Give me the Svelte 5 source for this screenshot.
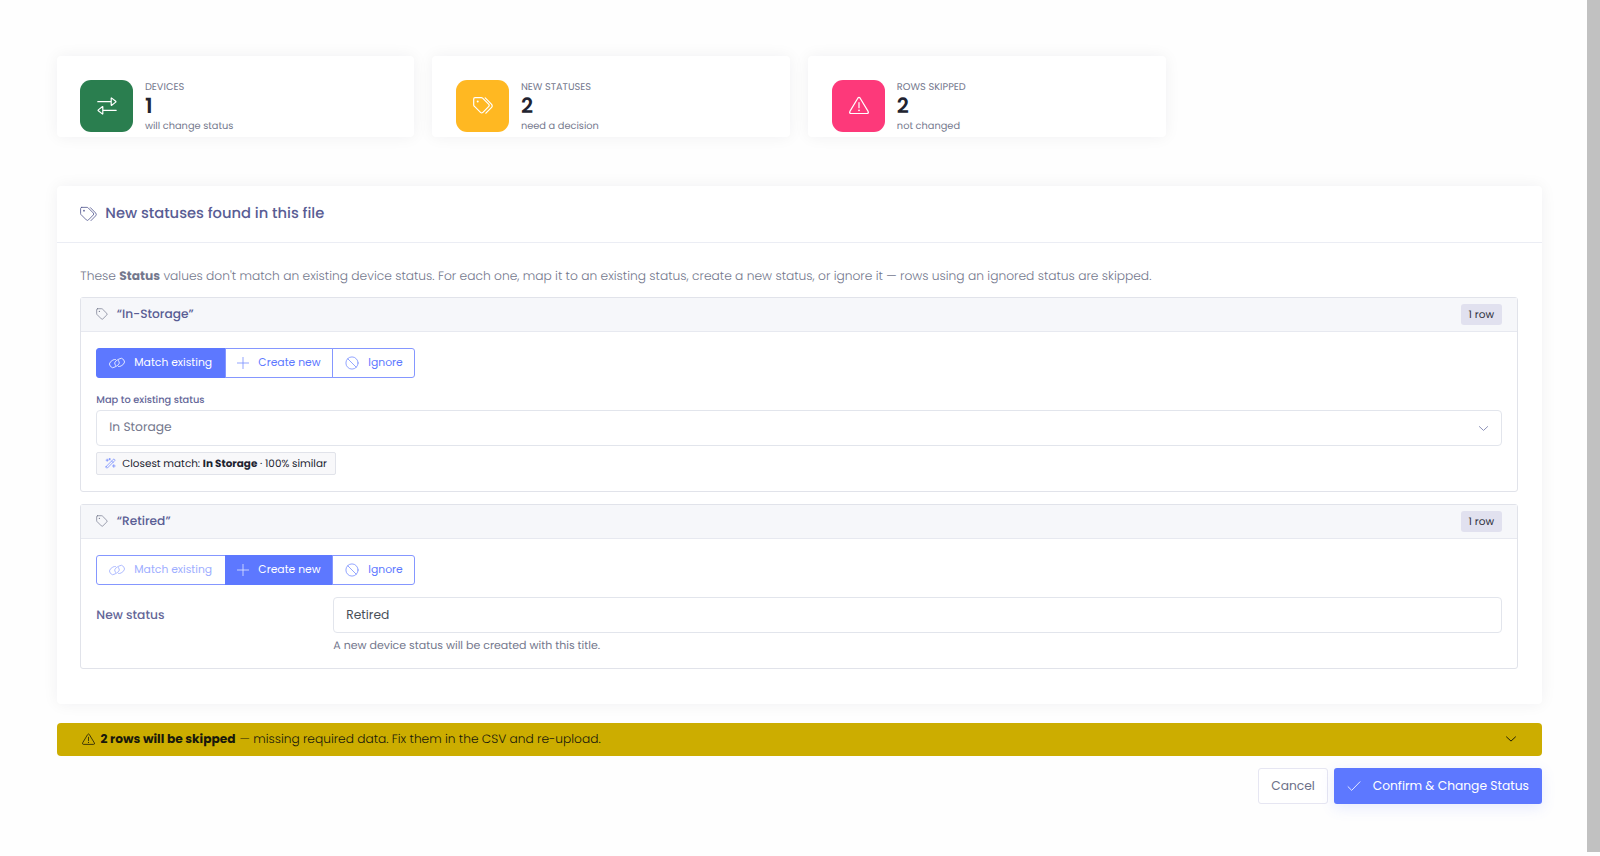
<script>
  const stats = [
    { label: "DEVICES", value: 1, note: "will change status", icon: "swap", tone: "green" },
    { label: "NEW STATUSES", value: 2, note: "need a decision", icon: "tags", tone: "amber" },
    { label: "ROWS SKIPPED", value: 2, note: "not changed", icon: "warning", tone: "pink" },
  ];

  const actions = [
    { id: "match", label: "Match existing", icon: "link" },
    { id: "create", label: "Create new", icon: "plus" },
    { id: "ignore", label: "Ignore", icon: "ban" },
  ];

  let statuses = $state([
    { name: "In-Storage", rows: 1, action: "match", match: "In Storage", similar: 100 },
    { name: "Retired", rows: 1, action: "create", match: null, title: "Retired" },
  ]);
</script>

{#snippet icon(name, size)}
  <svg class="icon" width={size} height={size} viewBox="0 0 20 20">
    {#if name === "swap"}
      <path d="M.8 5.7h13.4M14.2 2.3v6.8q0 .6.5.2l4-3.2q.5-.4 0-.8l-4-3.2q-.5-.4-.5.2zM19.2 14.3H5.8M5.8 10.9v6.8q0 .6-.5.2l-4-3.2q-.5-.4 0-.8l4-3.2q.5-.4.5.2z" />
    {:else if name === "tags"}
      <path d="M2 1.6h6.2q.8 0 1.4.6l6 6q1.2 1.2 0 2.4l-5.7 5.8q-1.2 1.2-2.4 0l-6-6Q.7 9.8.7 9V3q0-1.4 1.3-1.4zM12.2 1.9l6.2 6.3q1.6 1.7 0 3.4l-5.5 5.6" />
      <circle class="dot" cx="4.7" cy="5.5" r="1" />
    {:else if name === "tag"}
      <path d="M2.6 1.2h6.8q.8 0 1.4.6l7.3 7.3q1.2 1.2 0 2.4l-6.7 6.7q-1.2 1.2-2.4 0l-7.3-7.3q-.6-.6-.6-1.4V2.7q0-1.5 1.5-1.5z" />
      <circle class="dot" cx="5.6" cy="5.7" r="1" />
    {:else if name === "warning"}
      <path d="M8.8 2.2q1.2-1.7 2.4 0l7.9 13.2q.9 1.9-1.2 2.1H2.1Q0 17.3.9 15.4zM10 6.5v5.2" />
      <circle class="dot" cx="10" cy="14.3" r=".9" />
    {:else if name === "link"}
      <g transform="rotate(14 10 10)">
        <path d="M8.7 13.4a4.1 4.1 0 0 1-.4-5.9l2.9-2.9a4.3 4.3 0 0 1 6.9 5.1l-2.2 2.6q-1.4 1.4-3 1.5" />
        <path d="M11.3 6.6a4.1 4.1 0 0 1 .4 5.9l-2.9 2.9a4.3 4.3 0 0 1-6.9-5.1l2.2-2.6q1.4-1.4 3-1.5" />
      </g>
    {:else if name === "plus"}
      <path d="M10 2v16M2 10h16" />
    {:else if name === "ban"}
      <circle cx="10" cy="10" r="8.7" />
      <path d="M3.9 3.9l12.2 12.2" />
    {:else if name === "wand"}
      <path d="M1.9 15.7L15.3 2.2q.8-.8 1.6 0l.9.9q.8.8 0 1.6L4.4 18.2q-.8.8-1.6 0l-.9-.9q-.8-.8 0-1.6zM12 5.5l2.6 2.6M4 2v4M2 4h4M8.5.8v2.5M7.3 2h2.5M16 12v5M13.5 14.5h5" />
    {:else if name === "check"}
      <path d="M1.5 11l5.2 5.2L18.5 4" />
    {:else if name === "down"}
      <path d="M2.5 6.5l7.5 7 7.5-7" />
    {/if}
  </svg>
{/snippet}

<div class="page">
  <main>
    <section class="stats">
      {#each stats as stat}
        <div class="stat">
          <div class="stat-icon {stat.tone}">{@render icon(stat.icon, 20)}</div>
          <div class="stat-text">
            <span class="stat-label">{stat.label}</span>
            <strong>{stat.value}</strong>
            <span class="stat-note">{stat.note}</span>
          </div>
        </div>
      {/each}
    </section>

    <section class="card">
      <header class="card-header">
        {@render icon("tags", 17)}
        <h2>New statuses found in this file</h2>
      </header>
      <div class="card-body">
        <p class="intro">
          These <b>Status</b> values don't match an existing device status. For each one, map it to an existing status, create a new status, or ignore it — rows using an ignored status are skipped.
        </p>

        {#each statuses as status}
          <div class="status">
            <div class="status-header">
              {@render icon("tag", 12)}
              <h3>“{status.name}”</h3>
              <span class="badge">{status.rows} row</span>
            </div>
            <div class="status-body">
              <div class="btn-group">
                {#each actions as action}
                  <button
                    class="{action.id} {status.action === action.id ? 'active' : ''}"
                    disabled={action.id === "match" && !status.match}
                    onclick={() => (status.action = action.id)}
                  >
                    {@render icon(action.icon, action.id === "match" ? 16 : 14)}
                    <span>{action.label}</span>
                  </button>
                {/each}
              </div>

              {#if status.action === "match"}
                <div class="map-label">Map to existing status</div>
                <div class="select">
                  <span>{status.match}</span>
                  {@render icon("down", 11)}
                </div>
                <div class="closest">
                  {@render icon("wand", 11)}
                  <span>Closest match: <b>{status.match}</b> · {status.similar}% similar</span>
                </div>
              {:else if status.action === "create"}
                <div class="new-status">
                  <label for="new-status">New status</label>
                  <div class="field">
                    <input id="new-status" type="text" bind:value={status.title} />
                    <small>A new device status will be created with this title.</small>
                  </div>
                </div>
              {/if}
            </div>
          </div>
        {/each}
      </div>
    </section>

    <div class="alert">
      {@render icon("warning", 13)}
      <b>2 rows will be skipped</b>
      <span>— missing required data. Fix them in the CSV and re-upload.</span>
      {@render icon("down", 12)}
    </div>

    <div class="footer">
      <button class="cancel">Cancel</button>
      <button class="confirm">
        {@render icon("check", 14)}
        <span>Confirm &amp; Change Status</span>
      </button>
    </div>
  </main>
  <div class="scrollbar"></div>
</div>

<style>
  :global(body) {
    margin: 0;
    background: #fefefe;
    overflow: hidden;
  }

  .page {
    display: flex;
    height: 856px;
    font-family: Poppins, Inter, sans-serif;
    font-size: 13px;
    color: #74788d;
    text-rendering: geometricPrecision;
  }

  .page * {
    box-sizing: border-box;
  }

  main {
    flex: 1;
    padding: 56px 45.4px 0 56.5px;
  }

  .scrollbar {
    width: 13px;
    height: 852px;
    background: #c1c1c1;
  }

  .icon {
    flex: none;
    fill: none;
    stroke: currentColor;
    stroke-width: 1.2;
    stroke-linecap: round;
    stroke-linejoin: round;
  }

  .icon .dot {
    fill: currentColor;
    stroke: none;
  }

  button {
    font-family: inherit;
  }

  h2,
  h3,
  p {
    margin: 0;
  }

  .stats {
    display: flex;
    gap: 18.4px;
  }

  .stat {
    display: flex;
    width: 357.6px;
    height: 81px;
    padding: 23.8px;
    border-radius: 4px;
    background: #fff;
    box-shadow: 0 0 16px rgba(40, 40, 50, 0.06);
  }

  .stat-icon {
    display: flex;
    align-items: center;
    justify-content: center;
    flex: none;
    width: 52.6px;
    height: 52.6px;
    margin-right: 12px;
    border-radius: 11px;
    color: #fff;
  }

  .green {
    background: #2a7e4f;
  }

  .amber {
    background: #ffb822;
  }

  .pink {
    background: #fd397a;
  }

  .stat-text {
    display: flex;
    flex-direction: column;
    white-space: nowrap;
  }

  .stat-label {
    font-size: 9.8px;
    line-height: 16.4px;
  }

  .stat-text strong {
    font-size: 21px;
    font-weight: 600;
    line-height: 22px;
    color: #212330;
  }

  .stat-note {
    font-size: 9.8px;
    line-height: 17px;
  }

  .card {
    height: 517.6px;
    margin-top: 49.4px;
    border-radius: 4px;
    background: #fff;
    box-shadow: 0 0 16px rgba(40, 40, 50, 0.06);
  }

  .card-header {
    display: flex;
    align-items: center;
    height: 56.6px;
    padding: 0 23.8px;
    border-bottom: 1px solid #ebedf4;
    color: #595d94;
  }

  .card-header .icon {
    stroke-width: 1;
  }

  h2 {
    margin-left: 8px;
    padding-top: 1px;
    font-size: 14.7px;
    font-weight: 500;
  }

  .card-body {
    padding: 22px 23.8px 0;
  }

  .intro {
    height: 32px;
    padding-top: 1px;
    font-size: 12.24px;
    font-weight: 300;
    line-height: 22px;
    white-space: nowrap;
  }

  .intro b {
    font-weight: 700;
  }

  .status {
    margin-bottom: 12px;
    border: 1px solid #e1e3ea;
    border-radius: 3px;
  }

  .status-header {
    display: flex;
    align-items: center;
    height: 34px;
    padding: 0 15px;
    border-bottom: 1px solid #e7e9f0;
    background: #f6f7fa;
  }

  h3 {
    margin-left: 8.5px;
    padding-top: 1.5px;
    font-size: 12.2px;
    font-weight: 500;
    color: #595d94;
  }

  .badge {
    width: 41px;
    height: 20.5px;
    margin-left: auto;
    border-radius: 3px;
    background: #e1e1ef;
    font-size: 10.5px;
    line-height: 21.5px;
    text-align: center;
    color: #30323e;
  }

  .status-body {
    padding: 15.6px 15px 16.4px;
  }

  .btn-group {
    display: flex;
  }

  .btn-group button {
    display: flex;
    align-items: center;
    height: 30px;
    padding: 0 0 0 12px;
    border: 1px solid #8597ff;
    background: #fff;
    font-size: 10.8px;
    white-space: nowrap;
    color: #5d78ff;
  }

  .btn-group span {
    padding-top: 1px;
  }

  .btn-group .icon {
    stroke-width: 1.1;
    opacity: 0.85;
  }

  .btn-group .match {
    width: 130px;
    border-radius: 3px 0 0 3px;
  }

  .btn-group .match span {
    margin-left: 9px;
  }

  .btn-group .create {
    width: 108px;
    margin-left: -1px;
    padding-left: 10px;
  }

  .btn-group .create span {
    margin-left: 8px;
  }

  .btn-group .ignore {
    width: 83px;
    margin-left: -1px;
    border-radius: 0 3px 3px 0;
  }

  .btn-group .ignore span {
    margin-left: 9px;
  }

  .btn-group .active {
    border-color: #5d78ff;
    background: #5d78ff;
    color: #fff;
  }

  .btn-group button:disabled {
    color: #9eaeff;
  }

  .map-label {
    margin-top: 14px;
    font-size: 9.8px;
    font-weight: 500;
    line-height: 18px;
    color: #646698;
  }

  .select {
    display: flex;
    align-items: center;
    justify-content: space-between;
    height: 36px;
    padding: 0 12px;
    border: 1px solid #e2e5ec;
    border-radius: 4px;
    font-size: 12.25px;
  }

  .select .icon {
    margin-top: 2px;
    stroke-width: 1.8;
    color: #8c91b7;
  }

  .closest {
    display: flex;
    align-items: center;
    width: 240px;
    height: 23px;
    margin-top: 6px;
    padding-left: 8px;
    border: 1px solid #e1e3ea;
    border-radius: 2px;
    background: #f8f8fa;
    font-size: 10.4px;
    white-space: nowrap;
    color: #212330;
  }

  .closest .icon {
    margin-right: 6px;
    color: #5d78ff;
  }

  .closest span {
    padding-top: 1.5px;
  }

  .closest b {
    font-weight: 700;
  }

  .new-status {
    display: flex;
    margin-top: 12px;
  }

  .new-status label {
    width: 237px;
    font-size: 12.25px;
    font-weight: 500;
    line-height: 37.4px;
    color: #646698;
  }

  .field {
    flex: 1;
  }

  .field input {
    display: block;
    width: 100%;
    height: 36px;
    padding: 1px 12px 0;
    border: 1px solid #e2e5ec;
    border-radius: 4px;
    font-family: inherit;
    font-size: 12.25px;
    color: #495057;
  }

  .field small {
    display: block;
    height: 19px;
    font-size: 11px;
    line-height: 25px;
  }

  .alert {
    display: flex;
    align-items: center;
    height: 32.6px;
    margin-top: 19px;
    padding: 0 25px;
    border-radius: 4px;
    background: #ccad00;
    font-size: 12.2px;
    white-space: nowrap;
    color: #18180c;
  }

  .alert b {
    margin: 0 4px 0 6px;
    padding-top: 1px;
  }

  .alert span {
    padding-top: 1px;
    font-weight: 300;
  }

  .alert .icon:last-child {
    margin-left: auto;
    stroke-width: 1.6;
  }

  .footer {
    display: flex;
    justify-content: flex-end;
    gap: 6px;
    margin-top: 12px;
  }

  .footer button {
    height: 36px;
    padding: 0;
    border-radius: 3px;
    font-size: 12.25px;
    white-space: nowrap;
  }

  .cancel {
    width: 70px;
    border: 1px solid #e6e6f2;
    background: #fff;
    color: #6c7087;
  }

  .confirm {
    display: flex;
    align-items: center;
    justify-content: center;
    gap: 12px;
    width: 207.6px;
    border: 0;
    background: #5d78ff;
    color: #fff;
    box-shadow: 0 4px 14px rgba(93, 120, 255, 0.15);
  }
</style>
